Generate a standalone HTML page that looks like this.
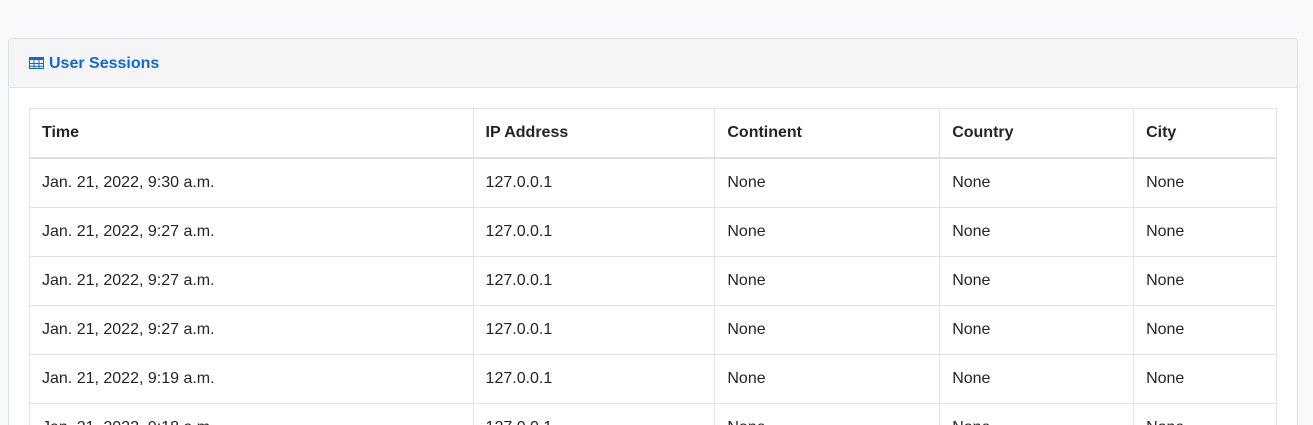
<!DOCTYPE html>
<html style="height:425px;overflow:hidden"><head><style>
body{margin:0;background:#f8f9fa;font-family:"Liberation Sans",sans-serif;font-size:16px;color:#212529;width:1313px;height:425px;overflow:hidden;position:relative}
.card{position:absolute;left:8px;top:38px;width:1288px;height:386px;background:#fff;border:1px solid #dee2e6;border-bottom:none;border-radius:4px 4px 0 0;overflow:hidden}
.hdr{background:#f5f5f5;border-bottom:1px solid #dee2e6;border-radius:4px 4px 0 0;display:flex;align-items:center;padding-left:20px;color:#0d6ad4;font-weight:bold;font-size:16px;padding-top:1px;box-sizing:border-box;height:49px}
.hdr svg{margin-right:5px;position:relative;top:-1px}
table{position:absolute;left:20px;top:69px;width:1248px;border-collapse:collapse}
td,th{border:1px solid #dee2e6;padding:0 12px;height:48px;text-align:left;font-size:16px}
th{border-bottom:2px solid #dee2e6;font-weight:bold}
</style></head><body>
<div class="card">
<div class="hdr"><svg width="15" height="12" viewBox="0 0 15 12"><rect x="0.5" y="0.5" width="14" height="11" fill="none" stroke="#0d6ad4"/><rect x="0" y="0" width="15" height="3" fill="#0d6ad4"/><path d="M5 3v9M10 3v9M0 6.5h15M0 9.2h15" stroke="#0d6ad4" stroke-width="1"/></svg>User Sessions</div>
<table>
<colgroup><col style="width:444px"><col style="width:242px"><col style="width:225px"><col style="width:194px"><col style="width:143px"></colgroup>
<tr><th>Time</th><th>IP Address</th><th>Continent</th><th>Country</th><th>City</th></tr>
<tr><td>Jan. 21, 2022, 9:30 a.m.</td><td>127.0.0.1</td><td>None</td><td>None</td><td>None</td></tr>
<tr><td>Jan. 21, 2022, 9:27 a.m.</td><td>127.0.0.1</td><td>None</td><td>None</td><td>None</td></tr>
<tr><td>Jan. 21, 2022, 9:27 a.m.</td><td>127.0.0.1</td><td>None</td><td>None</td><td>None</td></tr>
<tr><td>Jan. 21, 2022, 9:27 a.m.</td><td>127.0.0.1</td><td>None</td><td>None</td><td>None</td></tr>
<tr><td>Jan. 21, 2022, 9:19 a.m.</td><td>127.0.0.1</td><td>None</td><td>None</td><td>None</td></tr>
<tr><td>Jan. 21, 2022, 9:18 a.m.</td><td>127.0.0.1</td><td>None</td><td>None</td><td>None</td></tr>
</table>
</div>
</body></html>
